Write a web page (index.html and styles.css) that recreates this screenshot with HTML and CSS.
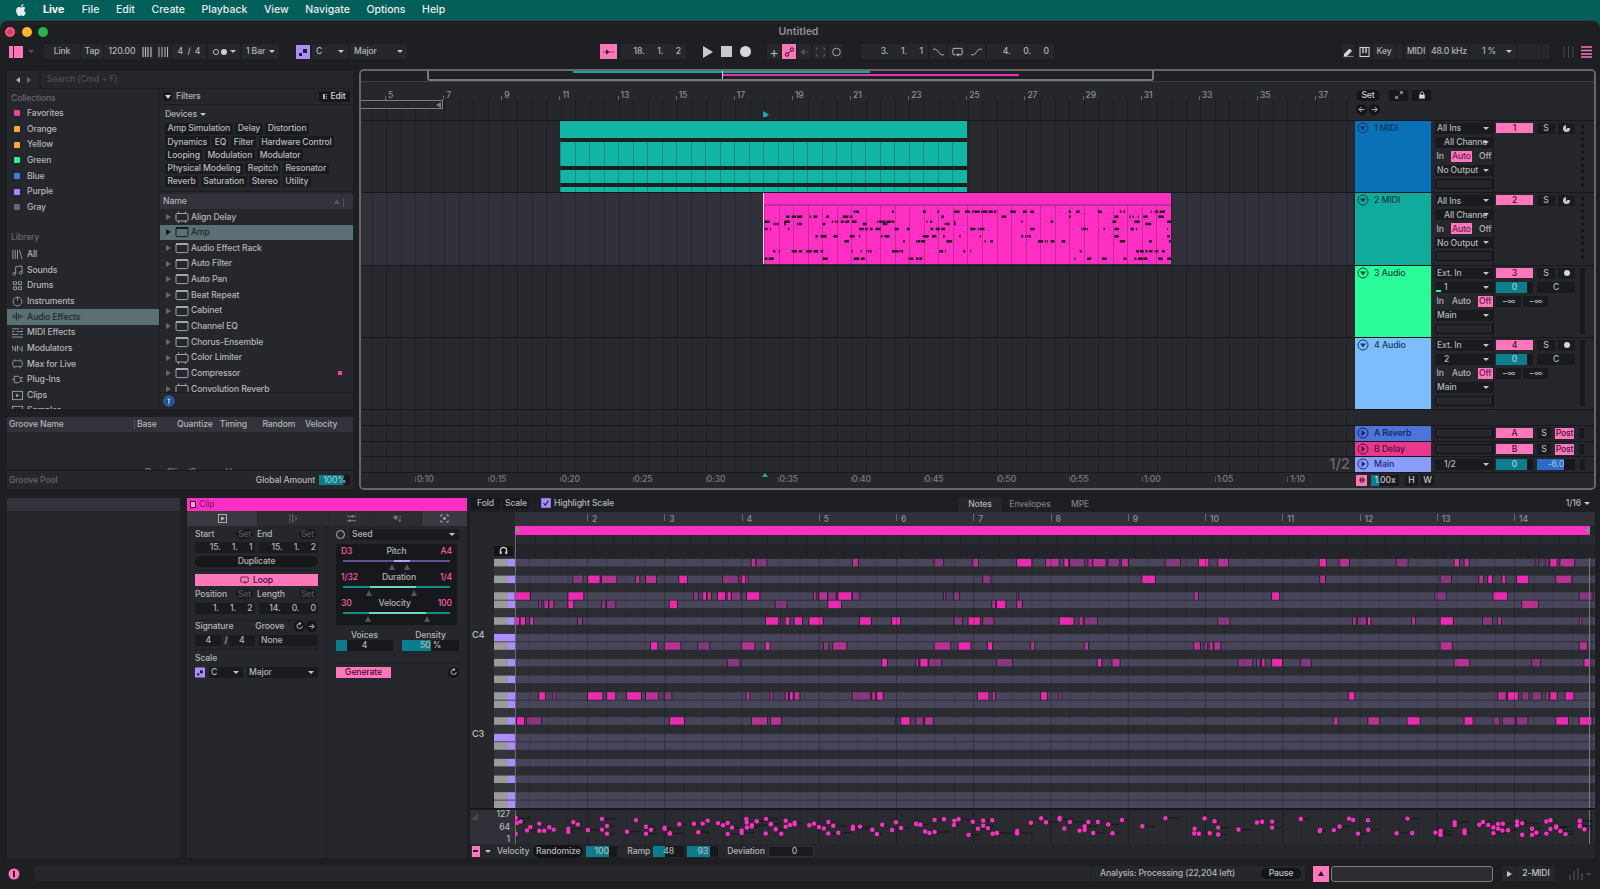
FILE: index.html
```html
<!DOCTYPE html>
<html lang="en">
<head>
<meta charset="utf-8">
<title>Ableton Live</title>
<link rel="stylesheet" href="styles.css">
</head>
<body>
<svg class="sprite" width="0" height="0">
  <symbol id="dev" viewBox="0 0 14 12"><rect x="1" y="1.6" width="12" height="9" rx="1.2" fill="none" stroke="currentColor"/><rect x="1" y="1" width="12" height="2" fill="currentColor"/></symbol>
  <symbol id="max" viewBox="0 0 14 12"><rect x="1" y="2.5" width="12" height="7.5" rx="1.2" fill="none" stroke="currentColor"/><path d="M3.5 0.5v2M10.500 0.5v2M3.500 10v2M10.500 10v2" stroke="currentColor" fill="none"/></symbol>
  <symbol id="down" viewBox="0 0 12 12"><circle cx="6" cy="6" r="5" fill="none" stroke="currentColor"/><path d="M3 4.500h6L6 8.500z" fill="currentColor"/></symbol>
  <symbol id="right" viewBox="0 0 12 12"><circle cx="6" cy="6" r="5" fill="none" stroke="currentColor"/><path d="M4.500 3v6L8.500 6z" fill="currentColor"/></symbol>
  <symbol id="scale" viewBox="0 0 14 14"><rect width="14" height="14" fill="#ad8cff"/><rect x="7" y="4" width="4" height="4" fill="#1d1d22"/><rect x="3" y="8" width="3" height="3" fill="#1d1d22"/></symbol>
</svg>

<nav class="menubar">
  <svg class="apple" viewBox="0 0 24 24"><path fill="#e8eeee" d="M12.152 6.896c-.948 0-2.415-1.078-3.96-1.04-2.04.027-3.91 1.183-4.961 3.014-2.117 3.675-.546 9.103 1.519 12.09 1.013 1.454 2.208 3.09 3.792 3.039 1.52-.065 2.09-.987 3.935-.987 1.831 0 2.35.987 3.96.948 1.637-.026 2.676-1.48 3.676-2.948 1.156-1.688 1.636-3.325 1.662-3.415-.039-.013-3.182-1.221-3.22-4.857-.026-3.04 2.48-4.494 2.597-4.559-1.429-2.09-3.623-2.324-4.39-2.376-2-.156-3.675 1.09-4.61 1.09zM15.53 3.83c.843-1.012 1.4-2.427 1.245-3.83-1.207.052-2.662.805-3.532 1.818-.78.896-1.454 2.338-1.273 3.714 1.338.104 2.715-.688 3.559-1.701"/></svg>
  <b>Live</b><span>File</span><span>Edit</span><span>Create</span><span>Playback</span><span>View</span><span>Navigate</span><span>Options</span><span>Help</span>
</nav>

<div class="window">
  <header class="titlebar">
    <div class="lights"><i class="l-r"></i><i class="l-y"></i><i class="l-g"></i></div>
    <div class="title">Untitled</div>
  </header>

  <div class="toolbar">
    <svg class="tool-view" viewBox="0 0 14 12"><rect width="4" height="12" fill="#ff77bb"/><rect x="5" width="9" height="12" fill="#ff77bb"/></svg>
    <i class="car ml5 dim"></i>
    <div class="c w36 ml10">Link</div>
    <div class="c w22 ml1">Tap</div>
    <div class="c w36 ml1">120.00</div>
    <div class="c w13 ml1"><svg class="ic" viewBox="0 0 11 10"><path d="M1 0v10M3.500 0v10M6 0v10M9 0v10" stroke="#b5b5b8" stroke-width="1.200"/></svg></div>
    <div class="c w14 ml2"><svg class="ic" viewBox="0 0 11 10"><path d="M1 0v10M4 0v10M7 0v10M9.500 0v10" stroke="#b5b5b8"/></svg></div>
    <div class="c w34 ml2">4 &nbsp;/&nbsp; 4</div>
    <div class="c w32 ml2 dd"><svg class="ic2" viewBox="0 0 16 8"><circle cx="4" cy="4" r="2.600" fill="none" stroke="#b5b5b8"/><circle cx="12" cy="4" r="3" fill="#d0d0d3"/></svg></div>
    <div class="c w37 ml2 dd lft">1 Bar</div>
    <svg class="c-ic ml17" viewBox="0 0 14 14"><use href="#scale"/></svg>
    <div class="c w36 ml2 dd lft">C</div>
    <div class="c w57 ml2 dd lft">Major</div>

    <div class="c w17 ml193 pink"><svg class="ic" viewBox="0 0 14 10"><path d="M0 5h14" stroke="#301020" stroke-dasharray="2 1"/><path d="M4 1.500v7L8 5z" fill="#301020"/></svg></div>
    <div class="c w65 ml4 num">18. &nbsp;1. &nbsp;2</div>
    <svg class="play ml17" viewBox="0 0 10 12"><path d="M0 0l10 6-10 6z" fill="#c9c9cb"/></svg>
    <div class="stop ml8"></div>
    <div class="rec ml8"></div>
    <div class="c w14 ml16 big">+</div>
    <div class="c w14 ml1 pink"><svg class="ic" viewBox="0 0 10 10"><circle cx="2.500" cy="7.500" r="1.700" fill="none" stroke="#301020"/><circle cx="7.500" cy="2.500" r="1.700" fill="none" stroke="#301020"/><path d="M4 6l2-2" stroke="#301020"/></svg></div>
    <div class="c w14 ml1"><svg class="ic" viewBox="0 0 10 10"><path d="M1 5h8M5 2L2 5l3 3" stroke="#55565a" fill="#55565a"/></svg></div>
    <div class="c w14 ml2"><svg class="ic" viewBox="0 0 10 10"><path d="M1 3V1h2M7 1h2v2M9 7v2H7M3 9H1V7" stroke="#55565a" fill="none"/></svg></div>
    <div class="c w14 ml2"><svg class="ic" viewBox="0 0 10 10"><circle cx="5" cy="5" r="3.800" fill="none" stroke="#a5a5a8"/></svg></div>
    <div class="c w67 ml18 num">3. &nbsp;1. &nbsp;1</div>
    <div class="c w16 ml2"><svg class="ic" viewBox="0 0 12 10"><path d="M0 2h3c2 0 4 6 6 6h3" stroke="#b5b5b8" fill="none"/></svg></div>
    <div class="c w18 ml2"><svg class="ic" viewBox="0 0 12 10"><path d="M4 8H2a1 1 0 0 1-1-1V2a1 1 0 0 1 1-1h8a1 1 0 0 1 1 1v5a1 1 0 0 1-1 1H6" stroke="#c5c5c8" fill="none"/><path d="M7 6v4L4.500 8z" fill="#c5c5c8"/></svg></div>
    <div class="c w18 ml1"><svg class="ic" viewBox="0 0 12 10"><path d="M0 8h3c2 0 4-6 6-6h3" stroke="#b5b5b8" fill="none"/></svg></div>
    <div class="c w67 ml2 num">4. &nbsp;0. &nbsp;0</div>

    <div class="c w12 ml288"><svg class="ic" viewBox="0 0 10 10"><path d="M1 7l5-5 2 2-5 5H1zM0 10h10" stroke="#d8d8da" fill="#d8d8da"/></svg></div>
    <div class="c w13 ml4"><svg class="ic" viewBox="0 0 10 10"><rect x=".5" y=".5" width="9" height="9" fill="none" stroke="#d0d0d3"/><path d="M3.500 0v6M6.500 0v6" stroke="#d0d0d3" stroke-width="1.400"/></svg></div>
    <div class="c w22 ml2">Key</div>
    <div class="c w7 ml1"></div>
    <div class="c w22 ml2">MIDI</div>
    <div class="c w40 ml2">48.0 kHz</div>
    <div class="c w46 ml1 dd lft pct">1 %</div>
    <div class="c w23 ml2"></div>
    <div class="c w7 ml1"></div>
    <svg class="ic-l ml14" viewBox="0 0 11 12"><path d="M1 0v12M5.500 0v12M10 0v12" stroke="#45464a"/></svg>
    <svg class="ic-l ml7" viewBox="0 0 11 12"><path d="M0 1h11M0 4.500h11M0 8h11M0 11h11" stroke="#ff77bb" stroke-width="1.400"/></svg>
  </div>

  <main class="upper">
    <section class="browser">
      <div class="searchbar">
        <div class="navs"><i class="tl"></i><i class="tr-dim"></i></div>
        <div class="search">Search (Cmd + F)</div>
      </div>
      <div class="browser-body">
        <aside class="sidebar">
          <div class="sb hd">Collections</div>
          <div class="sb"><i class="sq q-fav"></i>Favorites</div>
          <div class="sb"><i class="sq q-or"></i>Orange</div>
          <div class="sb"><i class="sq q-or"></i>Yellow</div>
          <div class="sb"><i class="sq q-gr"></i>Green</div>
          <div class="sb"><i class="sq q-bl"></i>Blue</div>
          <div class="sb"><i class="sq q-pu"></i>Purple</div>
          <div class="sb"><i class="sq q-gy"></i>Gray</div>
          <div class="sb hd lib">Library</div>
          <div class="sb li"><svg class="si" viewBox="0 0 12 12"><path d="M1 1v10M3.500 1v10M6 1v10M8 1l3 10" stroke="currentColor" fill="none"/></svg>All</div>
          <div class="sb li"><svg class="si" viewBox="0 0 12 12"><path d="M4 9V2l7-1v7" stroke="currentColor" fill="none"/><circle cx="2.500" cy="9.500" r="1.500" fill="none" stroke="currentColor"/><circle cx="9.500" cy="8.500" r="1.500" fill="none" stroke="currentColor"/></svg>Sounds</div>
          <div class="sb li"><svg class="si" viewBox="0 0 12 12"><path d="M1.500 2h3.500v3H1.500zM7 2h3.500v3H7zM1.500 7.500h3.500v3H1.500zM7 7.500h3.500v3H7z" stroke="currentColor" fill="none"/></svg>Drums</div>
          <div class="sb li"><svg class="si" viewBox="0 0 12 12"><circle cx="6" cy="6" r="4.800" fill="none" stroke="currentColor"/><path d="M6 1v4" stroke="currentColor"/></svg>Instruments</div>
          <div class="sb li on"><svg class="si" viewBox="0 0 12 12"><path d="M0 6h2M3 3.500v5M5 1.500v9M7 3v6M9 4v4M10 6h2" stroke="currentColor" fill="none"/></svg>Audio Effects</div>
          <div class="sb li"><svg class="si" viewBox="0 0 12 12"><path d="M0 2h8M10 2h2M0 5h3M5 5h7M0 8h7M9 8h3M0 11h12" stroke="currentColor" fill="none"/></svg>MIDI Effects</div>
          <div class="sb li"><svg class="si" viewBox="0 0 12 12"><path d="M0 9V3l4 6V3M6 9V3l5 6V3" stroke="currentColor" fill="none"/></svg>Modulators</div>
          <div class="sb li"><svg class="si" viewBox="0 0 12 12"><use href="#max"/></svg>Max for Live</div>
          <div class="sb li"><svg class="si" viewBox="0 0 12 12"><path d="M0 6h2M2.500 2.500h5l2 2v3l-2 2h-5zM9.500 4h2.500M9.500 8h2.500" stroke="currentColor" fill="none"/></svg>Plug-Ins</div>
          <div class="sb li"><svg class="si" viewBox="0 0 12 12"><rect x=".5" y="1.500" width="11" height="9" fill="none" stroke="currentColor"/><path d="M4.500 4v4L8 6z" fill="currentColor"/></svg>Clips</div>
          <div class="sb li"><svg class="si" viewBox="0 0 12 12"><rect x=".5" y="1.500" width="11" height="9" fill="none" stroke="currentColor"/></svg>Samples</div>
        </aside>
        <div class="filters">
          <div class="f-head"><i class="filt"></i><span class="f-t">Filters</span><div class="edit"><i class="ed-dots"></i>Edit</div></div>
          <div class="f-dev">Devices <i class="car wh"></i></div>
          <div class="tags">
            <div class="tag-row"><span>Amp Simulation</span><span>Delay</span><span>Distortion</span></div>
            <div class="tag-row"><span>Dynamics</span><span>EQ</span><span>Filter</span><span>Hardware Control</span></div>
            <div class="tag-row"><span>Looping</span><span>Modulation</span><span>Modulator</span></div>
            <div class="tag-row"><span>Physical Modeling</span><span>Repitch</span><span>Resonator</span></div>
            <div class="tag-row"><span>Reverb</span><span>Saturation</span><span>Stereo</span><span>Utility</span></div>
          </div>
          <div class="name-head">Name<i class="sort"></i></div>
          <ul class="dev-list">
            <li><i class="tri"></i><svg class="di"><use href="#max"/></svg>Align Delay</li>
            <li class="sel"><i class="tri"></i><svg class="di"><use href="#dev"/></svg>Amp</li>
            <li><i class="tri"></i><svg class="di"><use href="#dev"/></svg>Audio Effect Rack</li>
            <li><i class="tri"></i><svg class="di"><use href="#dev"/></svg>Auto Filter</li>
            <li><i class="tri"></i><svg class="di"><use href="#dev"/></svg>Auto Pan</li>
            <li><i class="tri"></i><svg class="di"><use href="#dev"/></svg>Beat Repeat</li>
            <li><i class="tri"></i><svg class="di"><use href="#dev"/></svg>Cabinet</li>
            <li><i class="tri"></i><svg class="di"><use href="#dev"/></svg>Channel EQ</li>
            <li><i class="tri"></i><svg class="di"><use href="#dev"/></svg>Chorus-Ensemble</li>
            <li><i class="tri"></i><svg class="di"><use href="#max"/></svg>Color Limiter</li>
            <li><i class="tri"></i><svg class="di"><use href="#dev"/></svg>Compressor<i class="fav"></i></li>
            <li><i class="tri"></i><svg class="di"><use href="#max"/></svg>Convolution Reverb</li>
          </ul>
          <div class="f-foot"><svg class="fi" viewBox="0 0 12 12"><circle cx="6" cy="6" r="5" fill="#1d4f8a" stroke="#3a7ad0"/><path d="M4 5l2-2 2 2zM5.300 5h1.400v4H5.300z" fill="#9cc4f0"/></svg></div>
        </div>
      </div>
      <div class="groove">
        <div class="g-head"><span class="g1">Groove Name</span><span class="g2">Base</span><span class="g3">Quantize</span><span class="g3">Timing</span><span class="g3">Random</span><span>Velocity</span></div>
        <div class="g-body"><span>Drop Clips/Grooves Here</span></div>
        <div class="g-foot"><span class="dim">Groove Pool</span><div class="g-amt">Global Amount<div class="amt">100%</div></div></div>
      </div>
    </section>

    <section class="arr">
      <div class="overview">
        <i class="ov-teal"></i><i class="ov-pink"></i><i class="ov-cur"></i>
        <div class="ov-frame"></div>
      </div>
      <div class="arr-top">
        <div class="ruler">
          <div class="bars"><span>5</span><span>7</span><span>9</span><span>11</span><span>13</span><span>15</span><span>17</span><span>19</span><span>21</span><span>23</span><span>25</span><span>27</span><span>29</span><span>31</span><span>33</span><span>35</span><span>37</span></div>
          <div class="ruler-grid"><div class="brace"><i></i></div><i class="marker"></i></div>
        </div>
        <div class="setbox">
          <div class="set-row"><div class="pill">Set</div><div class="sq-b"><svg viewBox="0 0 10 10"><path d="M1 9l3-3M6 4l3-3M6 1h3v3M1 6v3h3" stroke="#d5d5d8" fill="none"/></svg></div><div class="sq-b"><svg viewBox="0 0 10 10"><rect x="1.500" y="4.500" width="7" height="5" fill="#d5d5d8"/><path d="M3 5V3a2 2 0 0 1 4 0v2" stroke="#d5d5d8" fill="none"/></svg></div></div>
          <div class="set-row2"><i class="rnd">←</i><i class="rnd">→</i></div>
        </div>
      </div>

      <div class="tr">
        <div class="lane">
          <div class="clip-t"><i class="ct-a"></i><i class="ct-d"></i><i class="ct-b"></i><i class="ct-d"></i><i class="ct-c"></i><i class="ct-d"></i><i class="ct-e"></i></div>
        </div>
        <div class="thd t1"><svg class="ti"><use href="#down"/></svg>1 MIDI</div>
        <div class="inc">
          <div class="f dd">All Ins</div>
          <div class="f dd ind">All Channe</div>
          <div class="io"><span>In</span><span class="pk">Auto</span><span>Off</span></div>
          <div class="f dd">No Output</div>
          <div class="f box"></div>
        </div>
        <div class="mix"><div class="m-r"><div class="mn">1</div><div class="ms">S</div><div class="mr"><i class="mon"></i></div></div><i class="dots"></i></div>
      </div>
      <div class="tr sel-tr">
        <div class="lane">
          <div class="clip-p"><div class="cp-h"></div><svg id="mini" class="mini" viewBox="0 0 408 58" preserveAspectRatio="none"></svg></div>
        </div>
        <div class="thd t2"><svg class="ti"><use href="#down"/></svg>2 MIDI</div>
        <div class="inc">
          <div class="f dd">All Ins</div>
          <div class="f dd ind">All Channe</div>
          <div class="io"><span>In</span><span class="pk">Auto</span><span>Off</span></div>
          <div class="f dd">No Output</div>
          <div class="f box"></div>
        </div>
        <div class="mix"><div class="m-r"><div class="mn">2</div><div class="ms">S</div><div class="mr"><i class="mon"></i></div></div><i class="dots"></i></div>
      </div>
      <div class="tr">
        <div class="lane"></div>
        <div class="thd t3"><svg class="ti"><use href="#down"/></svg>3 Audio</div>
        <div class="inc">
          <div class="f dd">Ext. In</div>
          <div class="f dd ind"><i class="lvl"></i>1</div>
          <div class="io"><span>In</span><span>Auto</span><span class="pk">Off</span></div>
          <div class="f dd">Main</div>
          <div class="f box"></div>
        </div>
        <div class="mix">
          <div class="m-col">
            <div class="m-r"><div class="mn">3</div><div class="ms">S</div><div class="mr"><i class="arm"></i></div></div>
            <div class="m-r"><div class="vol">0</div><div class="pan">C</div></div>
            <div class="m-r"><div class="inf">−∞</div><div class="inf">−∞</div></div>
          </div>
          <i class="meter"></i>
        </div>
      </div>
      <div class="tr">
        <div class="lane"></div>
        <div class="thd t4"><svg class="ti"><use href="#down"/></svg>4 Audio</div>
        <div class="inc">
          <div class="f dd">Ext. In</div>
          <div class="f dd ind">2</div>
          <div class="io"><span>In</span><span>Auto</span><span class="pk">Off</span></div>
          <div class="f dd">Main</div>
          <div class="f box"></div>
        </div>
        <div class="mix">
          <div class="m-col">
            <div class="m-r"><div class="mn">4</div><div class="ms">S</div><div class="mr"><i class="arm"></i></div></div>
            <div class="m-r"><div class="vol">0</div><div class="pan">C</div></div>
            <div class="m-r"><div class="inf">−∞</div><div class="inf">−∞</div></div>
          </div>
          <i class="meter"></i>
        </div>
      </div>
      <div class="tr gap-tr"><div class="lane"></div></div>

      <div class="tr ret">
        <div class="lane"></div>
        <div class="thd ta"><svg class="ti"><use href="#right"/></svg>A Reverb</div>
        <div class="inc"><div class="f box"></div></div>
        <div class="mix"><div class="m-r"><div class="mn">A</div><div class="ms nar">S</div><div class="post">Post</div><i class="mini-m"></i></div></div>
      </div>
      <div class="tr ret">
        <div class="lane"></div>
        <div class="thd tb-d"><svg class="ti"><use href="#right"/></svg>B Delay</div>
        <div class="inc"><div class="f box"></div></div>
        <div class="mix"><div class="m-r"><div class="mn">B</div><div class="ms nar">S</div><div class="post">Post</div><i class="mini-m"></i></div></div>
      </div>
      <div class="tr ret">
        <div class="lane"><span class="half">1/2</span></div>
        <div class="thd tm"><svg class="ti"><use href="#right"/></svg>Main</div>
        <div class="inc"><div class="f dd ind">1/2</div></div>
        <div class="mix"><div class="m-r"><div class="vol">0</div><div class="cue">-6.0</div><i class="mini-m"></i></div></div>
      </div>

      <div class="arr-bot">
        <div class="times"><span>0:10</span><span>0:15</span><span>0:20</span><span>0:25</span><span>0:30</span><span>0:35</span><span>0:40</span><span>0:45</span><span>0:50</span><span>0:55</span><span>1:00</span><span>1:05</span><span>1:10</span><i class="t-mark"></i></div>
        <div class="bot-ctrl">
          <div class="xfade"><svg viewBox="0 0 10 10"><path d="M1 5h8M3 2v6M5 1v8M7 2v6" stroke="#301020"/></svg></div>
          <div class="speed"><span>1.00x</span></div>
          <div class="hw">H</div><div class="hw">W</div>
        </div>
      </div>
    </section>
  </main>

  <section class="lower">
    <div class="empty-pane"><div class="ep-head"></div></div>

    <div class="detail">
      <div class="clip-head"><i class="clip-sq"></i>Clip</div>
      <div class="tabs">
        <div class="tab on t-a"><svg viewBox="0 0 10 10"><rect x=".5" y=".5" width="9" height="9" fill="none" stroke="#bbb"/><path d="M3.500 2.500v5L7.500 5z" fill="#bbb"/></svg></div>
        <div class="tab t-a"><svg viewBox="0 0 10 10"><path d="M1 0v10M4 0v10M5 2l4 3-4 3" stroke="#6f7075" fill="none"/></svg></div>
        <div class="tab t-b"><svg viewBox="0 0 10 10"><path d="M0 2.500h10M0 7.500h10" stroke="#8a8b90"/><path d="M6 1v3M3 6v3" stroke="#8a8b90" stroke-width="1.500"/></svg></div>
        <div class="tab t-b"><svg viewBox="0 0 10 10"><circle cx="3" cy="4" r="2.500" fill="#6f7075"/><circle cx="8" cy="3" r="1" fill="#6f7075"/><circle cx="7.500" cy="7" r="1.500" fill="#6f7075"/></svg></div>
        <div class="tab on t-b"><svg viewBox="0 0 10 10"><path d="M1 1h2M7 1h2M1 9h2M7 9h2M1 1v2M9 1v2M1 7v2M9 7v2" stroke="#bbb" fill="none"/><circle cx="5" cy="5" r="1.500" fill="#bbb"/></svg></div>
      </div>
      <div class="d-body">
        <div class="d-left">
          <div class="lab-row first"><span class="lab-a">Start</span><span class="mset">Set</span><span class="lab-b">End</span><span class="mset">Set</span></div>
          <div class="val-row"><div class="val wide">15. &nbsp;1. &nbsp;1</div><div class="val wide">15. &nbsp;1. &nbsp;2</div></div>
          <div class="dup">Duplicate</div>
          <hr class="rule r1">
          <div class="loop"><svg viewBox="0 0 12 10"><path d="M4 8H2a1 1 0 0 1-1-1V2a1 1 0 0 1 1-1h8a1 1 0 0 1 1 1v5a1 1 0 0 1-1 1H6" stroke="#301020" fill="none"/><path d="M7 6v4L4.500 8z" fill="#301020"/></svg>Loop</div>
          <div class="lab-row pos"><span class="lab-a">Position</span><span class="mset">Set</span><span class="lab-b">Length</span><span class="mset">Set</span></div>
          <div class="val-row tight"><div class="val wide">1. &nbsp;1. &nbsp;2</div><div class="val wide">14. &nbsp;0. &nbsp;0</div></div>
          <hr class="rule r2">
          <div class="lab-row no"><span class="lab-a">Signature</span><span class="lab-b grv">Groove</span><i class="rnd">↻</i><i class="rnd">→</i></div>
          <div class="val-row sig"><div class="val ctr s1">4</div><span class="slash">/</span><div class="val ctr s1">4</div><div class="val lft2 s2">None</div></div>
          <hr class="rule r3">
          <div class="lab-row sc"><span>Scale</span></div>
          <div class="scale-row"><svg class="sc-ic"><use href="#scale"/></svg><div class="f dd sc-c">C</div><div class="f dd sc-m">Major</div></div>
        </div>
        <div class="d-right">
          <div class="seed"><i class="seed-i"></i><div class="f dd sd">Seed</div></div>
          <div class="gen-box">
            <div class="range"><span class="pk-t">D3</span><span>Pitch</span><span class="pk-t">A4</span></div>
            <div class="slide sl-p"><i></i></div>
            <div class="tris t1a"><i></i><i></i></div>
            <div class="range"><span class="pk-t">1/32</span><span>Duration</span><span class="pk-t">1/4</span></div>
            <div class="slide sl-d"><i></i></div>
            <div class="tris t1b"><i></i><i></i></div>
            <div class="range"><span class="pk-t">30</span><span>Velocity</span><span class="pk-t">100</span></div>
            <div class="slide sl-v"><i></i></div>
            <div class="tris t1c"><i></i><i></i></div>
          </div>
          <div class="vd-labels"><span>Voices</span><span>Density</span></div>
          <div class="vd-vals"><div class="vd voi"><span>4</span></div><div class="vd den"><span>50 %</span></div></div>
          <hr class="rule r4">
          <div class="gen-row"><div class="gen">Generate</div><i class="rnd">↻</i></div>
        </div>
      </div>
    </div>

    <div class="piano">
      <div class="p-bar">
        <div class="pb-btn b-fold">Fold</div><div class="pb-btn b-scale">Scale</div>
        <div class="check"><svg viewBox="0 0 10 10"><path d="M2 5l2 3 4-6" stroke="#1b1b22" stroke-width="1.300" fill="none"/></svg></div>
        <span class="hl">Highlight Scale</span>
        <div class="p-tabs"><span class="pt on">Notes</span><span class="pt">Envelopes</span><span class="pt">MPE</span></div>
        <div class="grid-q">1/16 <i class="car wh"></i></div>
      </div>
      <div class="p-ruler">
        <div class="p-ticks"><span>2</span><span>3</span><span>4</span><span>5</span><span>6</span><span>7</span><span>8</span><span>9</span><span>10</span><span>11</span><span>12</span><span>13</span><span>14</span></div>
      </div>
      <div class="p-loop"><i class="lp-s"></i><i class="lp-e"></i></div>
      <div class="p-head">
        <div class="p-hl"><div class="phones"><svg viewBox="0 0 10 10"><path d="M1.500 8V5a3.500 3.500 0 0 1 7 0v3" stroke="#d5d5d8" stroke-width="1.300" fill="none"/><rect x="1" y="6" width="2" height="3" fill="#d5d5d8"/><rect x="7" y="6" width="2" height="3" fill="#d5d5d8"/></svg></div></div>
        <div class="p-hr"></div>
      </div>
      <svg id="roll" class="roll" width="1125" height="250" viewBox="0 0 1125 250"></svg>
      <div class="v-lane">
        <div class="v-left"><svg class="v-ic" viewBox="0 0 8 8"><path d="M1 8V6M3 8V4M5 8V2M7 8V0" stroke="#66676b"/></svg><div class="v-num"><span>127</span><span>64</span><span>1</span></div></div>
        <svg id="vel" class="vel" width="1080" height="34" viewBox="0 0 1080 34"></svg>
      </div>
      <div class="p-foot">
        <div class="pf-pk"><i></i></div><i class="car wh pf-c"></i>
        <span class="pf-t">Velocity</span>
        <div class="rand">Randomize</div>
        <div class="pf-v v100">100</div>
        <span class="pf-t ram">Ramp</span>
        <div class="pf-v v48">48</div>
        <div class="pf-v v93">93</div>
        <span class="pf-t dev">Deviation</span>
        <div class="pf-v v0">0</div>
      </div>
    </div>
  </section>

  <footer class="status">
    <svg class="info" viewBox="0 0 12 12"><circle cx="6" cy="6" r="5.500" fill="#ff77bb"/><rect x="5" y="2.500" width="2" height="7" rx="1" fill="#301020"/></svg>
    <div class="st-bar"></div>
    <div class="analysis"><span>Analysis: Processing (22,204 left)</span><div class="pause">Pause</div></div>
    <div class="st-pk"><i></i></div>
    <div class="st-box"></div>
    <div class="st-play"><i></i></div>
    <div class="st-name">2-MIDI</div>
    <svg class="st-ic" viewBox="0 0 22 12"><path d="M1 12V7M5 12V3M9 12V0M13 12V5" stroke="#48494d" stroke-width="1.400"/><path d="M17 5h5l-2.500 3z" fill="#48494d"/></svg>
  </footer>
</div>
<script src="script.js"></script>
</body>
</html>
```
FILE: styles.css
```css
* { box-sizing: border-box; }
html, body { margin: 0; height: 889px; overflow: hidden; }
body {
  background: #035f5a;
  color: #b4b5b8;
  font: 500 8.600px/1 "Inter", "Liberation Sans", sans-serif;
  letter-spacing: -.12px;
  white-space: nowrap;
}
i { display: block; font-style: normal; }
.sprite { position: absolute; }
hr { margin: 0; border: 0; }

/* mac menu */
.menubar { height: 20px; display: flex; align-items: center; color: #e3eeec; font-size: 10.500px; letter-spacing: 0; padding-left: 15px; }
.menubar .apple { width: 12px; height: 14px; margin-right: 16px; }
.menubar b { margin-right: 17.500px; font-weight: 700; color: #fff; }
.menubar span { margin-right: 16.600px; }

.window { height: 869px; background: #1e1f23; border-radius: 8px 8px 0 0; border-top: 1px solid #3b3c3f; display: flex; flex-direction: column; }

/* title */
.titlebar { height: 23px; display: flex; align-items: center; position: relative; justify-content: center; }
.lights { position: absolute; left: 5px; top: 6px; display: flex; gap: 6.500px; }
.lights i { width: 10px; height: 10px; border-radius: 50%; }
.l-r { background: radial-gradient(circle, #d0329a 40%, #f0605f 41%); }
.l-y { background: #f9b52d; }
.l-g { background: #28b548; }
.title { font-size: 10.500px; font-weight: 600; letter-spacing: 0; color: #8f9094; margin-left: -3px; }

/* toolbar */
.toolbar { height: 15px; display: flex; align-items: center; padding-left: 9px; flex: none; }
.c { height: 15px; background: #26272c; display: flex; align-items: center; justify-content: center; flex: none; }
.num { justify-content: flex-end; padding-right: 5px; word-spacing: 4.200px; }
.lft { justify-content: flex-start; padding-left: 4px; }
.pct { padding-left: 12px; }
.dd { position: relative; }
.dd::after { content: ""; position: absolute; right: 4px; top: 50%; margin-top: -1.500px; border: 3px solid transparent; border-top: 3.500px solid #c5c5c8; border-bottom: 0; }
.pink { background: #ff77bb; }
.big { font-size: 14px; font-weight: 400; }
.ic { width: 11px; height: 10px; }
.ic2 { width: 16px; height: 8px; margin-right: 8px; }
.c-ic { width: 14px; height: 14px; flex: none; }
.ic-l { width: 11px; height: 12px; flex: none; }
.tool-view { width: 14px; height: 12px; flex: none; }
.play { width: 10px; height: 12px; flex: none; }
.stop { width: 11px; height: 11px; background: #c9c9cb; flex: none; }
.rec { width: 11px; height: 11px; border-radius: 50%; background: #d8d8da; flex: none; }
.w7 { width: 7px; } .w12 { width: 12px; } .w13 { width: 13px; } .w14 { width: 14px; } .w16 { width: 16px; } .w17 { width: 17px; } .w18 { width: 18px; }
.w22 { width: 22px; } .w23 { width: 23px; } .w32 { width: 32px; } .w34 { width: 34px; } .w36 { width: 36px; } .w37 { width: 37px; }
.w40 { width: 40px; } .w46 { width: 46px; } .w57 { width: 57px; } .w65 { width: 65px; } .w67 { width: 67px; }
.ml1 { margin-left: 1px; } .ml2 { margin-left: 2px; } .ml4 { margin-left: 4px; } .ml5 { margin-left: 5px; } .ml7 { margin-left: 7px; } .ml8 { margin-left: 8px; }
.ml10 { margin-left: 10px; } .ml14 { margin-left: 14px; } .ml16 { margin-left: 16px; } .ml17 { margin-left: 17px; } .ml18 { margin-left: 18px; }
.ml193 { margin-left: 193px; } .ml288 { margin-left: 288px; }
.car { width: 0; height: 0; border: 3px solid transparent; border-top: 3.500px solid #55565a; border-bottom: 0; flex: none; }
.car.wh { border-top-color: #c5c5c8; }

/* main areas */
.upper { display: flex; height: 421px; margin-top: 10px; padding-left: 7px; gap: 6px; flex: none; }
.browser { width: 346px; margin-top: 2px; display: flex; flex-direction: column; flex: none; }
.searchbar { height: 17px; display: flex; gap: 2px; margin-bottom: 1px; flex: none; }
.navs { width: 32px; background: #26272c; display: flex; align-items: center; justify-content: space-around; padding: 0 5px; }
.tl { border: 3px solid transparent; border-right: 4px solid #b5b5b8; border-left: 0; }
.tr-dim { border: 3px solid transparent; border-left: 4px solid #66676b; border-right: 0; }
.search { flex: 1; background: #26272c; display: flex; align-items: center; padding-left: 6px; color: #4d4e53; }
.browser-body { height: 320px; display: flex; gap: 1px; flex: none; }
.sidebar { width: 152px; background: #26272c; flex: none; overflow: hidden; padding-top: 1px; }
.sb { height: 15.650px; display: flex; align-items: center; padding-left: 7px; }
.sb.hd { color: #66676b; padding-left: 4px; }
.sb.lib { margin-top: 14.500px; margin-bottom: 1.300px; }
.sq { width: 6px; height: 6px; margin-right: 7px; border-radius: 1px; }
.q-fav { background: #e8469a; } .q-or { background: #f9a83a; } .q-gr { background: #2cf09a; } .q-bl { background: #3e7ae0; } .q-pu { background: #a985ff; } .q-gy { background: #66676b; }
.sb.li { padding-left: 5px; }
.si { width: 11px; height: 11px; margin-right: 4px; color: #9fa0a4; flex: none; }
.sb.on { background: #5a7074; color: #22262a; }
.sb.on .si { color: #22262a; }

.filters { flex: 1; background: #26272c; display: flex; flex-direction: column; min-width: 0; }
.f-head { height: 16px; display: flex; align-items: center; padding-left: 3px; border-bottom: 1px solid #1b1c1f; position: relative; flex: none; }
.filt { width: 9px; height: 9px; border-radius: 50%; background: #151618 ; position: relative; margin-right: 4px; }
.filt::after { content: ""; position: absolute; left: 1.500px; top: 2.500px; border: 3px solid transparent; border-top: 4px solid #d5d5d8; border-bottom: 0; }
.f-t { color: #b4b5b8; }
.edit { margin-left: auto; margin-right: 3px; background: #17181b; width: 31px; height: 11px; display: flex; align-items: center; justify-content: center; gap: 3px; color: #d5d5d8; }
.ed-dots { width: 4px; height: 5px; border-left: 2px solid #b5b5b8; border-right: 1px dotted #b5b5b8; }
.f-dev { height: 18px; display: flex; align-items: center; padding-left: 5px; gap: 3px; flex: none; }
.tags { height: 69px; border-bottom: 1px solid #1b1c1f; display: flex; flex-direction: column; gap: 1.700px; flex: none; }
.tag-row { display: flex; gap: 2.500px; padding-left: 5px; height: 11.500px; flex: none; }
.tag-row span { background: #1a1b1e; padding: 0 2.500px; display: flex; align-items: center; color: #b9babd; }
.name-head { height: 15px; background: #32333a; margin-top: 2px; display: flex; align-items: center; padding-left: 3px; color: #b4b5b8; position: relative; flex: none; }
.sort { position: absolute; right: 13px; top: 5px; border: 3px solid transparent; border-bottom: 5px solid #55565a; border-top: 0; }
.sort::after { content: ""; position: absolute; left: 6px; top: 0; width: 1px; height: 8px; background: #55565a; }
.dev-list { list-style: none; margin: 0; padding: 0; height: 184px; overflow: hidden; border-bottom: 1px solid #1b1c1f; flex: none; }
.dev-list li { height: 15.650px; display: flex; align-items: center; padding-left: 6px; position: relative; }
.dev-list li.sel { background: #5a7074; color: #22262a; }
.tri { border: 3px solid transparent; border-left: 5px solid #66676b; border-right: 0; margin-right: 4px; }
.sel .tri { border-left-color: #17181b; }
.di { width: 14px; height: 12px; color: #a5a6aa; margin-right: 2px; flex: none; }
.sel .di { color: #17181b; }
.fav { position: absolute; right: 11px; top: 6px; width: 4px; height: 4px; background: #ff3f9f; }
.f-foot { flex: 1; display: flex; align-items: center; padding-left: 3px; }
.fi { width: 12px; height: 12px; }

.groove { height: 72px; margin-top: 8px; background: #26272c; display: flex; flex-direction: column; flex: none; }
.g-head { height: 15px; background: #32333a; display: flex; align-items: center; padding-left: 2px; flex: none; }
.g1 { width: 125px; } .g2 { width: 43px; border-left: 1px solid #55565a; padding-left: 2px; } .g3 { width: 42.700px; }
.g-body { height: 39px; overflow: hidden; display: flex; justify-content: center; align-items: flex-end; color: #7d7e82; margin-bottom: 0; border-bottom: 1px solid #17181b; flex: none; }
.g-body span { margin-bottom: -7px; margin-left: 30px; }
.g-foot { flex: 1; display: flex; align-items: center; justify-content: space-between; padding: 0 3px 0 2px; }
.dim { color: #66676b; }
.g-amt { display: flex; align-items: center; gap: 4px; }
.amt { width: 31px; height: 10px; background: linear-gradient(90deg, #0c7d8c 78%, #17181b 78%); color: #8fc8d0; text-align: center; line-height: 10px; }

/* arrangement */
.arr { width: 1237px; height: 421px; border: 2px solid #66676b; border-radius: 5px; background: #1e1f23; display: flex; flex-direction: column; flex: none; overflow: hidden; }
.overview { height: 10px; position: relative; background: #1f2024; flex: none; }
.ov-teal { position: absolute; left: 212px; top: 0; width: 297px; height: 2px; background: #15a89c; }
.ov-pink { position: absolute; left: 361px; top: 3px; width: 297px; height: 2px; background: #e82fae; }
.ov-cur { position: absolute; left: 361px; top: 0; width: 1px; height: 10px; background: #cfcfd2; }
.ov-frame { position: absolute; left: 66px; top: -2px; width: 727px; height: 12px; border: 2px solid #77787c; border-top: 0; border-radius: 0 0 3px 3px; }
.arr-top { display: flex; height: 40px; flex: none; border-top: 1px solid #3f4044; border-bottom: 1px solid #17181b; background: #26272c; }
.ruler { width: 992px; flex: none; }
.bars { height: 18px; display: flex; padding-left: 24px; align-items: flex-end; color: #8f9094; }
.bars span { width: 58.140px; flex: none; padding-left: 3px; position: relative; }
.bars span::before { content: ""; position: absolute; left: 0; bottom: 0; width: 1px; height: 4px; background: #66676b; }
.ruler-grid {
  height: 20px; position: relative;
  background: repeating-linear-gradient(90deg, #1b1c1f 10.660px, #1b1c1f 11.660px, transparent 11.660px, transparent 25.195px);
}
.brace { position: absolute; left: 0; top: 0; width: 82px; height: 9px; border: 1px solid #7d7e82; border-left: 0; background: #26272c; }
.brace i { position: absolute; right: 1px; top: 1px; border: 3px solid transparent; border-right: 5px solid #7d7e82; border-left: 0; }
.marker { position: absolute; left: 402px; top: 11px; width: 6px; height: 6px; background: #12b0a0; clip-path: polygon(0 0, 100% 60%, 50% 100%, 0 100%); }
.setbox { flex: 1; padding: 7px 0 0 3px; }
.set-row { display: flex; align-items: center; height: 12px; }
.pill { width: 24px; height: 11px; background: #141518; border-radius: 6px; text-align: center; line-height: 11px; color: #d0d0d3; margin-right: 9px; }
.sq-b { width: 19px; height: 11px; background: #17181b; margin-right: 4px; display: flex; align-items: center; justify-content: center; }
.sq-b svg { width: 8px; height: 8px; }
.set-row2 { display: flex; gap: 2px; margin-top: 3px; }
.rnd { width: 11px; height: 11px; border-radius: 50%; background: #141518; color: #c5c5c8; text-align: center; font-size: 8px; line-height: 11px; flex: none; }

.tr { height: 72.300px; display: flex; flex: none; border-bottom: 1px solid #17181b; background: #26272c; }
.lane {
  width: 992px; flex: none; position: relative; margin-right: 2px;
  background: repeating-linear-gradient(90deg, #202125 10.660px, #202125 11.660px, transparent 11.660px, transparent 25.195px), #28292e;
}
.sel-tr .lane { background: repeating-linear-gradient(90deg, #27282c 10.660px, #27282c 11.660px, transparent 11.660px, transparent 25.195px), #30313a; }
.gap-tr { height: 16px; }
.ret { height: 15.500px; }
.thd { width: 76px; flex: none; display: flex; align-items: flex-start; padding: 0 0 0 2px; line-height: 14px; font-size: 8.800px; font-weight: 500; margin-right: 2px; }
.ret .thd { align-items: center; padding-top: 0; }
.ti { width: 12px; height: 12px; margin: 1px 5px 0 0; flex: none; }
.ret .ti { margin-top: 0; }
.t1 { background: #0a70b8; color: #063b5e; } .t2 { background: #11ab9e; color: #053f3a; } .t3 { background: #2bfc9a; color: #0c4a3a; } .t4 { background: #7dbdfb; color: #1c3a60; }
.ta { background: #4d74d8; color: #0f2460; } .tb-d { background: #e8398f; color: #5a0f38; } .tm { background: #8a9dfa; color: #1d2a70; padding-left: 2px; }
.inc { width: 61px; flex: none; padding: 2px 0 0 2px; display: flex; flex-direction: column; gap: 3px; border-right: 1px solid #17181b; }
.ret .inc { padding-top: 2px; }
.f { height: 11px; background: #1a1b1e; display: flex; align-items: center; padding-left: 2px; flex: none; position: relative; overflow: hidden; }
.f.box { background: #26272c; border: 1px solid #111215; height: 10px; }
.f.ind { padding-left: 9px; }
.lvl { position: absolute; left: 1px; bottom: 1px; width: 5px; height: 2px; background: #2bfc9a; }
.io { display: flex; height: 11px; justify-content: space-between; }
.io span { background: #26272c; padding: 0 1.500px; display: flex; align-items: center; }
.io .pk { background: #ff77bb; color: #60204a; }
.mix { flex: 1; display: flex; padding: 2px 0 0 2px; position: relative; }
.m-col { display: flex; flex-direction: column; gap: 3px; }
.m-r { display: flex; height: 11px; }
.mn { width: 37px; height: 10px; background: #ff77bb; color: #40103a; text-align: center; line-height: 10px; flex: none; }
.ms { width: 18px; height: 11px; margin-left: 4px; background: #1a1b1e; text-align: center; line-height: 11px; }
.ms.nar { width: 14px; }
.mr { width: 17px; height: 11px; margin-left: 3px; background: #1a1b1e; display: flex; align-items: center; justify-content: center; }
.mon { width: 7px; height: 7px; border-radius: 50%; background: conic-gradient(#1a1b1e 0 90deg, #c5c5c8 90deg); }
.arm { width: 6px; height: 6px; border-radius: 50%; background: #d5d5d8; }
.dots { width: 5px; height: 66px; margin-left: 5px; margin-top: 0; background: radial-gradient(circle, #141518 1.800px, transparent 2px) 0 0/5px 6.500px repeat-y; }
.meter { width: 5px; height: 66px; margin-left: 5px; background: #1a1b1e; }
.vol { width: 37px; height: 11px; background: linear-gradient(90deg, #0c7d8c 84%, #17181b 84%); color: #a7d4db; text-align: center; line-height: 11px; flex: none; }
.pan { width: 38px; height: 11px; margin-left: 4px; background: #1a1b1e; text-align: center; line-height: 11px; }
.inf { width: 25px; height: 11px; margin-right: 2px; background: #1a1b1e; text-align: center; line-height: 11px; }
.post { width: 19px; height: 11px; margin-left: 4px; background: #ff77bb; color: #40103a; text-align: center; line-height: 11px; }
.cue { width: 38px; height: 11px; margin-left: 4px; background: linear-gradient(90deg, #2a6cc6 70%, #17181b 70%); color: #a0bce0; text-align: center; line-height: 11px; }
.mini-m { width: 5px; height: 11px; margin-left: 5px; background: #1a1b1e; }
.half { position: absolute; right: 3px; top: -1px; font-size: 15px; color: #66676b; }

.clip-t { position: absolute; left: 199px; top: 0; width: 407px; height: 71px; display: flex; flex-direction: column; }
.ct-a { height: 17px; background: #13b5a5; }
.ct-d { height: 4px; background: #1a1f20; margin-left: 2px; }
.ct-b, .ct-c, .ct-e { background: repeating-linear-gradient(90deg, #0f8f83 0 1px, #13b5a5 1px 14.535px); }
.ct-b { height: 24px; } .ct-c { height: 13px; } .ct-e { height: 5px; }
.clip-p { position: absolute; left: 402px; top: 0; width: 408px; height: 71px; background: #ff2fc4; border-left: 1px solid #ffd0f0; }
.cp-h { height: 13px; border-bottom: 2px solid #c52a9a; }
.mini { display: block; width: 407px; height: 58px; background: repeating-linear-gradient(90deg, #c52a9a 0 1px, transparent 1px 14.535px); }

.arr-bot { flex: 1; display: flex; background: #26272c; }
.times { width: 992px; flex: none; display: flex; padding: 2px 0 0 28px; color: #7d7e82; position: relative; }
.times span { width: 72.700px; text-align: center; flex: none; position: relative; }
.times span::before { content: ""; position: absolute; left: 26px; top: 2px; width: 1px; height: 5px; background: #55565a; }
.t-mark { position: absolute; left: 401px; top: 0; border: 3px solid transparent; border-bottom: 4px solid #13b5a5; border-top: 0; }
.bot-ctrl { flex: 1; display: flex; align-items: center; padding: 0 0 0 3px; gap: 4px; }
.xfade { width: 11px; height: 11px; background: #ff77bb; display: flex; align-items: center; justify-content: center; }
.xfade svg { width: 8px; height: 8px; }
.speed { width: 28px; height: 11px; background: linear-gradient(90deg, #0c7d8c 28%, #17181b 28%); text-align: center; line-height: 11px; color: #c5c5c8; margin-right: 2px; }
.hw { width: 13px; height: 11px; background: #1a1b1e; text-align: center; line-height: 11px; color: #c5c5c8; margin-right: -1px; }

/* lower */
.lower { display: flex; height: 360px; margin-top: 8px; padding-left: 7px; flex: none; }
.empty-pane { width: 173px; background: #26272c; margin-right: 7px; flex: none; }
.ep-head { height: 13px; background: #32333a; }
.detail { width: 280px; background: #26272c; margin-right: 3px; flex: none; display: flex; flex-direction: column; }
.clip-head { height: 13px; background: #ff2fc4; color: #8a1570; display: flex; align-items: center; padding: 0 0 1px 3px; gap: 3px; flex: none; }
.clip-sq { width: 6px; height: 7px; background: #ff9ae0; border: 1px solid #40103a; }
.tabs { height: 15px; display: flex; gap: 1px; flex: none; }
.tab { background: #2c2d33; display: flex; align-items: center; justify-content: center; }
.tab.on { background: #3a3b42; }
.tab svg { width: 9px; height: 9px; }
.t-a { width: 70px; } .t-b { width: 46px; flex: 1; }
.d-body { display: flex; flex: 1; }
.d-left { width: 140px; padding: 0 8px; border-right: 1px solid #1b1c1f; flex: none; }
.d-right { flex: 1; padding: 3px 8px 0 9px; }
.lab-row { height: 12px; display: flex; align-items: center; margin-top: 3px; }
.lab-row.first { margin-top: 2px; }
.lab-row.pos { margin-top: 2px; }
.lab-a { width: 41px; }
.lab-b { width: 42px; margin-left: 4px; }
.mset { width: 17px; height: 10px; background: #1a1b1e; border-radius: 5px; color: #55565a; text-align: center; line-height: 10px; }
.grv { width: 43px; margin-left: 22px; }
.lab-row .rnd { margin-right: 1px; }
.lab-row.no { margin-top: 0; }
.lab-row.sc { margin-top: 3px; }
.val-row { display: flex; gap: 4px; height: 11px; margin-top: 1.500px; }
.val-row.tight { margin-top: 3px; }
.val { background: #1a1b1e; height: 11px; line-height: 11px; }
.val.wide { width: 60px; text-align: right; padding-right: 2px; word-spacing: 3.500px; }
.val.ctr { text-align: center; }
.s1 { width: 27px; } .s2 { width: 60px; margin-left: 0; }
.lft2 { padding-left: 2px; }
.slash { width: 1px; line-height: 11px; margin: 0 -1px; }
.val-row.sig { margin-top: 2.500px; }
.dup { height: 11px; margin-top: 3.500px; background: #17181b; border-radius: 6px; text-align: center; line-height: 11px; }
.rule { height: 1px; background: #1b1c1f; }
.r1 { margin-top: 3px; margin-bottom: 3px; }
.r2 { margin-top: 5.500px; }
.r3 { margin-top: 2.500px; }
.loop { height: 12px; background: #ff77bb; color: #40103a; display: flex; align-items: center; justify-content: center; gap: 4px; }
.loop svg { width: 9px; height: 8px; }
.scale-row { display: flex; gap: 4px; margin-top: 2.500px; align-items: center; }
.sc-ic { width: 10px; height: 11px; flex: none; }
.sc-c { width: 34px; }
.sc-m { width: 71px; }
.seed { display: flex; align-items: center; gap: 5px; height: 11px; }
.seed-i { width: 9px; height: 9px; border-radius: 50%; border: 1.500px solid #b5b5b8; flex: none; }
.sd { width: 109px; }
.gen-box { height: 81px; background: #17181b; border-radius: 2px; margin-top: 3.500px; padding: 3px 5px 0; width: 121px; }
.range { display: flex; justify-content: space-between; height: 10px; align-items: center; }
.pk-t { color: #ff5cb0; }
.slide { height: 2px; background: #0f8f83; margin: 3.500px 2px 0; position: relative; }
.slide i { position: absolute; top: 0; height: 2px; background: #68d8cc; }
.sl-p { background: #5a5592; } .sl-p i { left: 48%; width: 15%; background: #b59cf5; }
.sl-d i { left: 25%; width: 43%; }
.sl-v i { left: 24%; width: 54%; }
.tris { height: 10.400px; position: relative; }
.tris i { position: absolute; top: 2px; border: 3.500px solid transparent; border-bottom: 6px solid #55565a; border-top: 0; }
.t1a i:first-child { left: 48px; } .t1a i:last-child { left: 63px; }
.t1b i:first-child { left: 25px; } .t1b i:last-child { left: 70px; }
.t1c i:first-child { left: 24px; } .t1c i:last-child { left: 83px; }
.vd-labels { display: flex; gap: 9px; margin-top: 6px; }
.vd-labels span { width: 57px; text-align: center; }
.vd-vals { display: flex; gap: 9px; margin-top: 1px; }
.vd { width: 57px; height: 11px; background: #17181b; text-align: center; line-height: 11px; }
.voi { background: linear-gradient(90deg, #0c7d8c 20%, #17181b 20%); }
.den { background: linear-gradient(90deg, #0c7d8c 50%, #17181b 50%); }
.r4 { margin-top: 11px; }
.gen-row { display: flex; justify-content: space-between; align-items: center; margin-top: 4px; }
.gen { width: 55px; height: 11px; background: #ff77bb; color: #40103a; text-align: center; line-height: 11px; }

.piano { width: 1125px; flex: none; background: #26272c; display: flex; flex-direction: column; }
.p-bar { height: 14px; background: #1e1f23; display: flex; align-items: flex-start; flex: none; position: relative; }
.pb-btn { height: 11px; background: #17181b; text-align: center; line-height: 11px; }
.b-fold { width: 29px; margin-left: 1px; } .b-scale { width: 26px; margin-left: 3px; }
.check { width: 10px; height: 10px; background: #ad8cff; margin-left: 12px; border: 1px solid #8a6fe0; }
.check svg { display: block; width: 8px; height: 8px; }
.hl { margin-left: 3px; line-height: 11px; }
.p-tabs { display: flex; margin-left: 344px; height: 14px; align-items: center; }
.pt { padding: 0; width: 44px; text-align: center; color: #7d7e82; height: 14px; line-height: 12px; margin-right: 6px; }
.pt.on { background: #26272c; color: #b4b5b8; }
.grid-q { margin-left: auto; margin-right: 5px; display: flex; align-items: center; gap: 3px; height: 11px; }
.p-ruler { height: 14px; flex: none; background: linear-gradient(90deg, #26272c 45px, #303138 45px); padding-left: 117px; }
.p-ticks { display: flex; height: 14px; align-items: center; color: #8f9094; }
.p-ticks span { width: 77.250px; flex: none; padding-left: 5px; position: relative; }
.p-ticks span::before { content: ""; position: absolute; left: 0; top: -1px; width: 1px; height: 7px; background: #66676b; }
.p-loop { height: 9px; margin-left: 45px; margin-right: 5px; background: #ff2fc4; position: relative; flex: none; }
.lp-s { position: absolute; left: 0; top: 1px; border: 3.500px solid transparent; border-left: 6px solid #8a8b90; border-right: 0; }
.lp-e { position: absolute; right: 0; top: 1px; border: 3.500px solid transparent; border-right: 6px solid #8a8b90; border-left: 0; }
.p-head { height: 23px; display: flex; flex: none; }
.p-hl { width: 45px; display: flex; justify-content: flex-end; padding: 11px 2px 0 0; flex: none; }
.phones { width: 19px; height: 10px; background: #141518; display: flex; justify-content: center; }
.phones svg { width: 9px; height: 9px; }
.p-hr {
  flex: 1; border-left: 1px solid #6a6b70;
  background: repeating-linear-gradient(90deg, #1f2024 0 1px, transparent 1px 19.310px), linear-gradient(#2a2b30 9px, #24252a 9px);
}
.roll { display: block; flex: none; }
.v-lane { height: 36px; display: flex; border-top: 2px solid #17181b; flex: none; background: #2a2b30; }
.v-left { width: 45px; display: flex; flex: none; padding: 0 1px 0 2px; background: #303138; justify-content: space-between; }
.v-ic { width: 6px; height: 8px; margin-top: 3px; }
.v-num { display: flex; flex-direction: column; justify-content: space-between; text-align: right; padding: 0 4px 0 0; height: 34px; }
.vel { display: block; flex: none; }
.p-foot { flex: 1; display: flex; align-items: center; background: #26272c; }
.pf-pk { width: 8px; height: 11px; background: #ff77bb; margin-left: 2px; position: relative; }
.pf-pk i { position: absolute; left: 1px; top: 4.500px; width: 5px; height: 2px; background: #301020; }
.pf-c { margin-left: 5px; }
.pf-t { margin-left: 6px; }
.pf-t.ram { margin-left: 10px; width: 22px; }
.pf-t.dev { margin-left: 9px; width: 38px; }
.rand { margin-left: 4px; width: 50px; height: 13px; background: #141518; border-radius: 7px; text-align: center; line-height: 13px; }
.pf-v { width: 31px; height: 11px; background: #17181b; text-align: center; line-height: 11px; margin-left: 3px; }
.v100 { background: linear-gradient(90deg, #0c7d8c 75%, #17181b 75%); }
.v48 { margin-left: 4px; background: linear-gradient(90deg, #0c7d8c 38%, #17181b 38%); }
.v93 { background: linear-gradient(90deg, #0c7d8c 75%, #17181b 75%); }
.v0 { width: 46px; margin-left: 3px; text-align: right; padding-right: 16px; background: #1a1b1e; border: 1px solid #303138; line-height: 9px; }

/* status */
.status { height: 17px; margin-top: 7px; display: flex; align-items: center; flex: none; padding-left: 8px; }
.info { width: 12px; height: 12px; flex: none; margin-right: 14px; }
.st-bar { width: 1056px; height: 15px; background: #26272c; flex: none; }
.analysis { width: 214px; height: 15px; background: #26272c; margin-left: 1px; display: flex; align-items: center; justify-content: space-between; padding: 0 4px 0 9px; flex: none; }
.pause { width: 40px; height: 11px; background: #141518; border-radius: 6px; text-align: center; line-height: 11px; color: #c5c5c8; }
.st-pk { width: 16px; height: 16px; background: #ff77bb; margin-left: 8px; display: flex; align-items: center; justify-content: center; flex: none; }
.st-pk i { border: 3px solid transparent; border-bottom: 5px solid #301020; border-top: 0; }
.st-box { width: 162px; height: 16px; margin-left: 2px; background: #2c2d33; border: 1.500px solid #7d7e82; border-radius: 3px; flex: none; }
.st-play { width: 14px; height: 15px; margin-left: 9px; background: #26272c; display: flex; align-items: center; justify-content: center; flex: none; }
.st-play i { border: 3px solid transparent; border-left: 5px solid #c5c5c8; border-right: 0; }
.st-name { width: 38px; height: 15px; margin-left: 1px; background: #26272c; text-align: center; line-height: 15px; color: #c5c5c8; flex: none; }
.st-ic { width: 22px; height: 12px; margin-left: 14px; flex: none; }
```
FILE: script.js
```js
// Pattern data: each row lists [start, end, level] in px along the note grid.
var L = function (z) { return 470 + z / 3; };
var R = function (z) { return 860 + z * 0.472; };
var rows = {
  0: { l: [[845,856,1],[860,889,2],[1149,1164,1]],
       r: [[158,176,2],[239,250,1],[333,363,0],[394,421,1],[433,441,0],[445,475,2],[484,491,1],[494,520,1],[526,549,2],[555,568,1],[647,678,2],[718,738,0],[759,780,1],[974,987,0],[1016,1036,1],[1137,1160,2],[1260,1269,0],[1281,1290,1],[1433,1436,2],[1454,1458,2],[1463,1476,0],[1484,1513,1]] },
  2: { l: [[310,338,2],[354,389,0],[396,439,1],[498,508,1],[528,558,1],[628,651,0],[759,804,2],[815,826,0],[829,834,2]],
       r: [[261,276,2],[598,625,0],[975,985,1],[1230,1252,2],[1312,1320,1],[1331,1339,0],[1361,1367,0],[1392,1416,0],[1475,1507,1]] },
  4: { l: [[137,180,0],[295,340,0],[672,684,2],[698,708,0],[713,723,1],[744,765,0],[773,782,0],[786,811,2],[831,868,0],[1032,1037,1],[1047,1071,1],[1075,1097,2],[1105,1144,0],[1149,1168,2]],
       r: [[178,181,2],[199,210,2],[333,335,2],[709,716,1],[873,888,0],[1219,1241,2],[1342,1371,0],[1525,1552,2]] },
  5: { l: [[208,213,2],[223,234,1],[238,250,1],[295,310,0],[396,406,2],[411,436,2],[599,621,0],[917,949,2],[1075,1113,0]],
       r: [[280,286,1],[290,308,0],[333,343,1],[1403,1436,1]] },
  7: { l: [[137,147,0],[152,165,0],[181,189,0],[324,336,2],[888,925,0],[934,937,2],[947,958,0],[974,996,0],[1018,1058,0]],
       r: [[0,23,0],[68,85,0],[200,216,2],[230,254,0],[261,283,2],[423,452,0],[465,472,1],[476,502,2],[759,783,2],[1045,1050,1],[1055,1072,2],[1076,1081,0],[1170,1176,1],[1230,1256,0],[1320,1339,2],[1352,1358,1],[1525,1528,1]] },
  10: { l: [[543,562,0],[584,631,1],[685,718,2],[815,853,1],[887,898,0],[1062,1075,2],[1090,1129,1]],
        r: [[158,191,1],[209,234,0],[271,280,0],[362,369,1],[476,483,1],[708,720,1],[730,735,1],[741,747,1],[751,763,1],[1230,1254,1],[1525,1540,1]] },
  12: { l: [[773,808,2]],
        r: [[47,57,0],[119,123,1],[128,143,0],[147,172,2],[290,322,2],[504,511,0],[535,550,1],[802,831,2],[841,847,2],[852,857,0],[873,894,0],[934,955,2],[1260,1290,1],[1424,1441,2],[1535,1545,0]] },
  16: { l: [[208,225,0],[251,256,1],[354,397,0],[411,436,0],[471,513,0],[528,564,1],[584,604,2],[830,838,1],[902,907,1],[947,954,1],[960,968,0],[974,988,1],[1148,1200,2]],
        r: [[26,32,1],[36,48,0],[250,272,0],[281,286,1],[384,396,0],[423,426,1],[1036,1047,0],[1352,1368,1],[1373,1394,0],[1403,1416,2],[1424,1443,2],[1454,1458,1],[1463,1476,0],[1495,1512,0]] },
  19: { l: [[141,162,0],[171,213,2],[600,642,0],[846,891,1],[903,933,1]],
        r: [[76,78,2],[87,105,0],[119,133,2],[138,154,1],[1004,1012,1],[1077,1100,1],[1160,1186,0],[1281,1298,0],[1342,1354,2],[1362,1388,2],[1392,1414,2],[1475,1500,0],[1525,1550,0]] }
};
var noteColor = ["#e92caf", "#b53492", "#83397c"];
var miniY = { 0: 5.700, 2: 10.700, 4: 15.700, 5: 18, 7: 23, 10: 30.300, 12: 35.300, 16: 45.300, 19: 52.700 };
var scale = [0, 2, 4, 5, 7, 9, 10, 12, 14, 16, 17, 19, 21, 22, 24, 26, 28, 29];
var STEP = 8.33, TOP = 4.700;

function rect(x, y, w, h, f) {
  return '<rect x="' + x.toFixed(1) + '" y="' + y.toFixed(2) + '" width="' + w.toFixed(1) + '" height="' + h + '" fill="' + f + '"/>';
}

var notes = [];
Object.keys(rows).forEach(function (k) {
  rows[k].l.forEach(function (n) { notes.push({ k: +k, a: L(n[0]), b: L(n[1]), v: n[2] }); });
  rows[k].r.forEach(function (n) { notes.push({ k: +k, a: R(n[0]), b: R(n[1]), v: n[2] }); });
});

// Roll: origin x = 470, y = 558
var s = rect(0, 0, 1125, 250, "#2b2c31");
s += rect(0, 0, 24, 250, "#26272c");
s += rect(24, 0, 21, 250, "#34353b");
scale.forEach(function (k) {
  var y = TOP + k * STEP - 3.750;
  s += rect(45, y, 1080, 7.500, "#484459");
  if (k === 9 || k === 21) {
    s += rect(24, y, 21, 7.500, "#ad8cff");
  } else {
    s += rect(24, y, 14, 7.500, "#9a9a9c");
    s += rect(38, y, 7, 7.500, "#ad8cff");
  }
});
notes.forEach(function (n) {
  var y = TOP + n.k * STEP - 3.750;
  s += rect(n.a - 471, y - 0.400, n.b - n.a + 2, 8.300, "#2c2130");
  s += rect(n.a - 470, y, n.b - n.a, 7.500, noteColor[n.v]);
});
for (var i = 0; i < 60; i++) {
  var gx = 39.750 + i * 19.3125;
  if (gx > 45) s += rect(gx, 0, 1, 250, i % 4 === 0 ? "rgba(20,20,24,.32)" : "rgba(20,20,24,.12)");
}
s += rect(45, 0, 1, 250, "#6a6b70");
s += rect(1119, 0, 1, 250, "#77787c");
s += '<text x="2" y="80" font-size="9" fill="#b4b5b8" font-family="Inter, sans-serif" font-weight="600">C4</text>';
s += '<text x="2" y="179" font-size="9" fill="#b4b5b8" font-family="Inter, sans-serif" font-weight="600">C3</text>';
document.getElementById("roll").innerHTML = s;

// Miniature of the same notes inside the arrangement clip
var m = "";
notes.forEach(function (n) {
  var x = (n.a - 515) * 408 / 1075, w = Math.max((n.b - n.a) * 408 / 1075, 1);
  m += rect(x, miniY[n.k] - 1.250, w, 2.500, "#2a1525");
});
document.getElementById("mini").innerHTML = m;

// Velocity lane: origin x = 515
var seed = 7, v = "";
function rnd() { seed = (seed * 16807) % 2147483647; return seed / 2147483647; }
for (var g = 0; g < 60; g++) {
  v += rect(-5.250 + g * 19.3125, 0, 1, 34, g % 4 === 0 ? "#1d1e22" : "#25262a");
}
v += rect(0, 0, 1, 34, "#6a6b70") + rect(1074, 0, 1, 34, "#77787c");
notes.sort(function (p, q) { return p.a - q.a; }).forEach(function (n) {
  var y = 8 + rnd() * 17, x = n.a - 515;
  v += rect(x, y - 0.500, Math.min(n.b - n.a, 16), 1, "#17181b");
  v += '<circle cx="' + x.toFixed(1) + '" cy="' + y.toFixed(1) + '" r="2.200" fill="#ff2ec4"/>';
});
document.getElementById("vel").innerHTML = v;
```
